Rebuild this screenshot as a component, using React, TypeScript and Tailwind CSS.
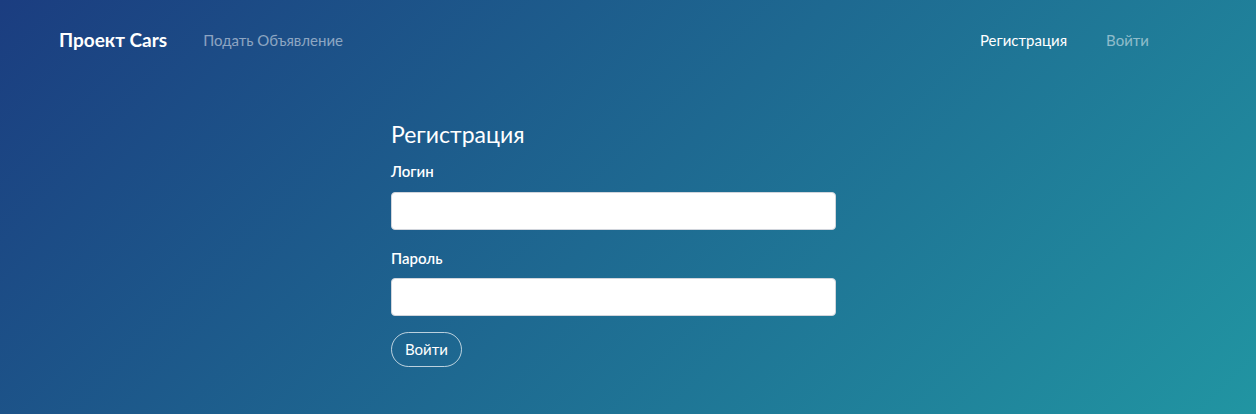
export default function App() {
  return (
    <div className="min-h-[414px] w-full bg-[linear-gradient(135deg,#1b3d80_0%,#2195a2_100%)] font-['Lato','Noto_Sans',sans-serif] text-white">
      <nav className="flex h-20 items-center pl-[59px] pr-[107px]">
        <a className="text-[19px] font-bold">Проект Cars</a>
        <a className="ml-9 text-[15px] text-white/50">Подать Объявление</a>
        <div className="ml-auto flex items-center gap-[39px] text-[15px]">
          <a className="text-white">Регистрация</a>
          <a className="text-white/50">Войти</a>
        </div>
      </nav>
      <div className="ml-[391px] w-[445px] pt-[40px]">
        <h2 className="text-[23px] leading-[28px]">Регистрация</h2>
        <label className="mt-[12px] block text-[15px] font-semibold">Логин</label>
        <input className="mt-[9px] block h-[38px] w-full rounded border border-gray-300 bg-white px-3 text-gray-800" />
        <label className="mt-[17px] block text-[15px] font-semibold">Пароль</label>
        <input
          type="password"
          className="mt-[9px] block h-[38px] w-full rounded border border-gray-300 bg-white px-3 text-gray-800"
        />
        <button className="mt-[16px] h-[35px] w-[71px] rounded-full border border-white/70 text-[15px]">
          Войти
        </button>
      </div>
    </div>
  );
}
